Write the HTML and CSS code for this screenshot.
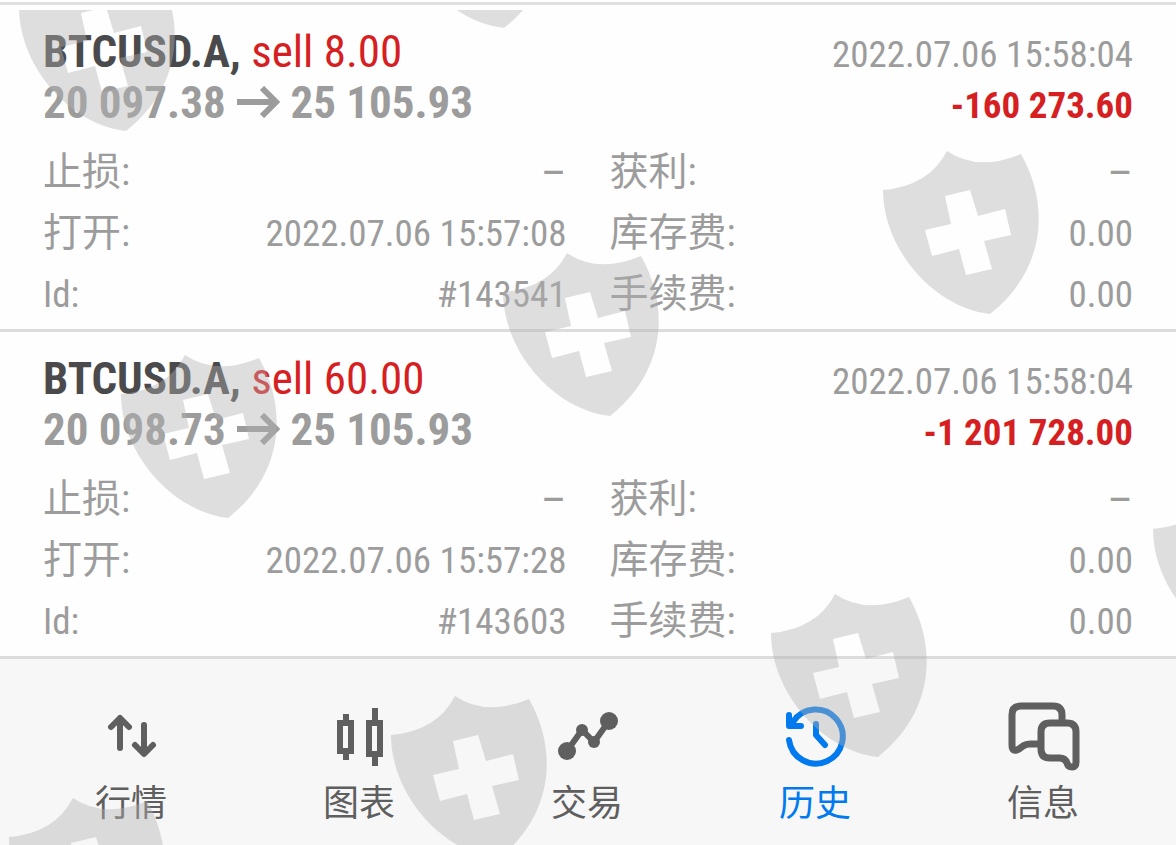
FILE: index.html
```html
<!DOCTYPE html>
<html lang="zh-CN">
<head>
    <meta charset="UTF-8">
    <meta name="viewport" content="width=device-width, initial-scale=1.0">
    <title>历史</title>
    <link rel="stylesheet" href="styles.css">
</head>
<body>

    <main class="history">
        <article class="deal">
            <div class="line title">
                <h2>BTCUSD.A, <span class="sell">sell 8.00</span></h2>
                <span class="time">2022.07.06 15:58:04</span>
            </div>
            <div class="line prices">
                <span>20 097.38 <svg class="arrow" viewBox="0 0 44 32"><path d="M1 16H39M26 2L40 16L26 30"/></svg> 25 105.93</span>
                <span class="loss">-160 273.60</span>
            </div>
            <dl class="details">
                <div><dt>止损:</dt><dd class="empty">–</dd></div>
                <div><dt>获利:</dt><dd class="empty">–</dd></div>
                <div><dt>打开:</dt><dd>2022.07.06 15:57:08</dd></div>
                <div><dt>库存费:</dt><dd>0.00</dd></div>
                <div><dt class="latin">Id:</dt><dd>#143541</dd></div>
                <div><dt>手续费:</dt><dd>0.00</dd></div>
            </dl>
        </article>

        <article class="deal">
            <div class="line title">
                <h2>BTCUSD.A, <span class="sell">sell 60.00</span></h2>
                <span class="time">2022.07.06 15:58:04</span>
            </div>
            <div class="line prices">
                <span>20 098.73 <svg class="arrow" viewBox="0 0 44 32"><path d="M1 16H39M26 2L40 16L26 30"/></svg> 25 105.93</span>
                <span class="loss">-1 201 728.00</span>
            </div>
            <dl class="details">
                <div><dt>止损:</dt><dd class="empty">–</dd></div>
                <div><dt>获利:</dt><dd class="empty">–</dd></div>
                <div><dt>打开:</dt><dd>2022.07.06 15:57:28</dd></div>
                <div><dt>库存费:</dt><dd>0.00</dd></div>
                <div><dt class="latin">Id:</dt><dd>#143603</dd></div>
                <div><dt>手续费:</dt><dd>0.00</dd></div>
            </dl>
        </article>
    </main>

    <nav class="tabs">
        <a href="#quotes">
            <svg viewBox="0 0 76 76"><path class="round" d="M27 50V20M18 29L27 20L36 29M51 27V55M42 47L51 56L60 47"/></svg>
            行情
        </a>
        <a href="#charts">
            <svg viewBox="0 0 76 76"><path d="M19 25H30V53H19ZM25 16V25M25 53V62M48 25H59V56H48ZM54 10V25M54 56V68"/></svg>
            图表
        </a>
        <a href="#trade">
            <svg viewBox="0 0 76 76">
                <path d="M18 53L33 32L45 44L60 23"/>
                <g class="dots"><circle cx="18" cy="53" r="9"/><circle cx="33" cy="32" r="6"/><circle cx="45" cy="44" r="6"/><circle cx="60" cy="23" r="9"/></g>
            </svg>
            交易
        </a>
        <a href="#history" class="active">
            <svg viewBox="0 0 76 76">
                <path class="round" d="M12 42A27 27 0 1 0 16 24M12 17V28H24M39 26V37L48 47"/>
                <path class="dots" d="M11 16L17 21L19 25L26 29L11 30Z"/>
            </svg>
            历史
        </a>
        <a href="#messages">
            <svg viewBox="0 0 76 76"><path class="round bubbles" d="M57 24V17Q57 8 48 8H16Q7 8 7 17V47Q7 55 14 51L18 48Q21 46 25 46H34M45 25H62Q71 25 71 34V64Q71 69 67 69Q63 69 62 65Q60 60 55 60H45Q36 60 36 51V34Q36 25 45 25Z"/></svg>
            信息
        </a>
    </nav>

    <!-- watermark shields laid over the whole screen -->
    <div class="watermark">
        <svg width="0" height="0">
            <symbol id="shield" viewBox="0 0 180 180">
                <path fill-rule="evenodd" d="M13 50Q59 46 77 11Q108 32 151 14C180 65 176 130 120 174C65 168 13 110 13 50ZM75 56L81 84L55 90L62 116L89 109L96 135L122 129L114 101L141 95L135 69L108 76L100 50Z"/>
            </symbol>
        </svg>
        <svg class="shield" style="left: 6px; top: -53px"><use href="#shield"/></svg>
        <svg class="shield" style="left: 384px; top: -156px"><use href="#shield"/></svg>
        <svg class="shield" style="left: 870px; top: 130px"><use href="#shield"/></svg>
        <svg class="shield" style="left: 490px; top: 232px"><use href="#shield"/></svg>
        <svg class="shield" style="left: 108px; top: 334px"><use href="#shield"/></svg>
        <svg class="shield" style="left: 1140px; top: 469px"><use href="#shield"/></svg>
        <svg class="shield" style="left: 758px; top: 573px"><use href="#shield"/></svg>
        <svg class="shield" style="left: 378px; top: 675px"><use href="#shield"/></svg>
        <svg class="shield" style="left: -4px; top: 777px"><use href="#shield"/></svg>
    </div>

</body>
</html>
```

FILE: styles.css
```css
* {
    box-sizing: border-box;
}

body {
    font-family: "Roboto Condensed", Roboto, "Noto Sans CJK SC", sans-serif;
    margin: 0;
    min-height: 100vh;
    display: flex;
    flex-direction: column;
    background: #fefefe;
    color: #9c9c9c;
    position: relative;
}

.history {
    margin-top: 2px;
    border-top: 3px solid #e0e0e0;
}

.deal {
    padding: 21px 43px 4px;
    border-bottom: 3px solid #dcdcdc;
}

.line {
    display: flex;
    justify-content: space-between;
    align-items: baseline;
    font-size: 45px;
    line-height: 51px;
    height: 51px;
    white-space: nowrap;
}

.title h2 {
    margin: 0;
    font-size: 45px;
    font-weight: bold;
    color: #4a4a4c;
}

.title .sell {
    font-weight: normal;
    color: #d61f22;
}

.time {
    font-size: 37px;
}

.prices {
    font-weight: bold;
}

.loss {
    font-size: 37px;
    color: #d61f22;
}

.arrow {
    width: 44px;
    height: 32px;
    fill: none;
    stroke: currentColor;
    stroke-width: 6;
}

.details {
    display: grid;
    grid-template-columns: 1fr 1fr;
    column-gap: 43px;
    margin: 14px 0 0;
    line-height: 61px;
}

.details div {
    display: flex;
    justify-content: space-between;
    height: 61px;
}

.details dt {
    font-size: 39px;
}

.details dd,
.details .latin {
    margin: 0;
    font-size: 37px;
}

.details .empty {
    font-size: 45px;
}

.tabs {
    flex: 1;
    display: flex;
    padding: 39px 19px 23px 17px;
    background: #f7f7f7;
}

.tabs a {
    flex: 1;
    display: flex;
    flex-direction: column;
    align-items: center;
    gap: 12px;
    color: #5f5f5f;
    font-size: 36px;
    line-height: 36px;
    text-decoration: none;
}

.tabs a.active {
    color: #007aee;
}

.tabs svg {
    width: 76px;
    height: 76px;
    fill: none;
    stroke: currentColor;
    stroke-width: 6;
}

.tabs .round {
    stroke-linecap: round;
    stroke-linejoin: round;
}

.tabs .bubbles {
    stroke-width: 7;
}

.tabs .dots {
    fill: currentColor;
    stroke: none;
}

.watermark {
    position: absolute;
    top: 10px;
    right: 0;
    bottom: 0;
    left: 0;
    overflow: hidden;
    pointer-events: none;
}

.shield {
    position: absolute;
    width: 180px;
    height: 180px;
    fill: rgba(177, 177, 177, 0.41);
}
```
